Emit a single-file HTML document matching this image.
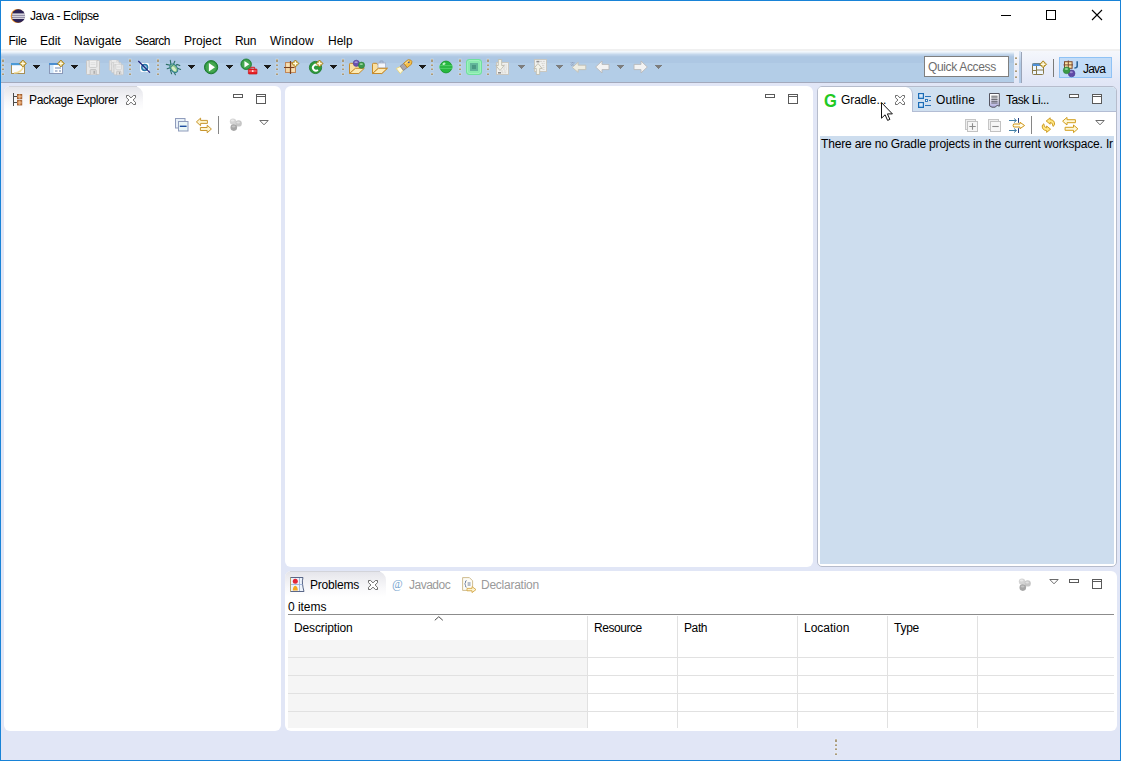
<!DOCTYPE html>
<html>
<head>
<meta charset="utf-8">
<title>Java - Eclipse</title>
<style>
html,body{margin:0;padding:0;}
body{width:1121px;height:761px;overflow:hidden;background:#e1e6f6;font-family:"Liberation Sans",sans-serif;font-size:12px;color:#000;position:relative;}
.a{position:absolute;}
svg{position:absolute;overflow:visible;}
.t{position:absolute;white-space:nowrap;line-height:16px;height:16px;}
#win{position:absolute;left:0;top:0;width:1119px;height:759px;border:1px solid #1883d7;background:#e1e6f6;overflow:hidden;}
/* all children of #win are positioned relative to (1,1); use #o to offset to page coords */
#o{position:absolute;left:-1px;top:-1px;width:1121px;height:761px;}
#titlebar{left:1px;top:1px;width:1119px;height:48px;background:#fff;}
#tbtop{left:1px;top:49px;width:1119px;height:2px;background:#f0f0f0;}
#toolbar{left:1px;top:51px;width:1013px;height:31px;background:linear-gradient(#f8fbfe 0px,#e6eff8 1.5px,#c4d7ec 3.5px,#b1c9e4 5.5px,#adc7e3 6.5px,#adc7e3 11.5px,#b3cde7 12.5px,#b3cde7 31px);}
#tbline{left:1px;top:82px;width:1013px;height:1px;background:#a3a9bc;}
#persp{left:1014px;top:51px;width:106px;height:32px;background:linear-gradient(#f5f7fc,#e1e6f6);}
.panel{position:absolute;background:#fff;border-radius:6px;}
.sep{position:absolute;width:1px;background:#868686;}
.hd{position:absolute;width:3px;height:16px;}
.arr{position:absolute;width:0;height:0;border-left:3.5px solid transparent;border-right:3.5px solid transparent;border-top:4px solid #1a1a1a;}
.arr.g{border-top-color:#787878;}
.gray{color:#9a9a9a;}
</style>
</head>
<body>
<div id="win"><div id="o">
  <div class="a" id="titlebar"></div>
  <div class="a" id="tbtop"></div>
  <div class="a" id="toolbar"></div>
  <div class="a" id="tbline"></div>
  <div class="a" id="persp"></div>
  <!-- title bar -->
  <svg style="left:10px;top:8px" width="16" height="16" viewBox="0 0 16 16">
    <circle cx="7.6" cy="8" r="6.9" fill="#f7941e"/>
    <circle cx="8.4" cy="8" r="6.7" fill="#2c2255"/>
    <rect x="2.2" y="5.5" width="12.6" height="1.3" fill="#fff"/>
    <rect x="1.8" y="7.5" width="13.2" height="1.3" fill="#fff"/>
    <rect x="2.2" y="9.5" width="12.6" height="1.3" fill="#fff"/>
  </svg>
  <span class="t" style="left:30px;top:8px;letter-spacing:-0.42px;">Java - Eclipse</span>
  <svg style="left:1001px;top:10px" width="102" height="11" viewBox="0 0 102 11">
    <path d="M0 5.5H10" stroke="#000" stroke-width="1" fill="none"/>
    <rect x="45.5" y="0.5" width="9" height="9" stroke="#000" stroke-width="1" fill="none"/>
    <path d="M91 0L101 10M101 0L91 10" stroke="#000" stroke-width="1.1" fill="none"/>
  </svg>
  <!-- menu -->
  <span class="t" style="left:8.5px;top:33px;letter-spacing:-0.3px;">File</span>
  <span class="t" style="left:40px;top:33px;">Edit</span>
  <span class="t" style="left:74px;top:33px;">Navigate</span>
  <span class="t" style="left:135px;top:33px;letter-spacing:-0.5px;">Search</span>
  <span class="t" style="left:184px;top:33px;">Project</span>
  <span class="t" style="left:235px;top:33px;letter-spacing:-0.3px;">Run</span>
  <span class="t" style="left:270px;top:33px;letter-spacing:0.2px;">Window</span>
  <span class="t" style="left:328px;top:33px;">Help</span>
<!--TITLE_END-->
<!--TOOLBAR-->
<svg style="left:1px;top:58px" width="4" height="18" viewBox="0 0 4 18"><rect x="0.4" y="0.4" width="3.2" height="4.2" fill="#ffffff" fill-opacity="0.22"/><rect x="1" y="1" width="2" height="3" fill="#a89a7c"/><rect x="1" y="1" width="2" height="1" fill="#c8bca4"/><rect x="0.4" y="5.4" width="3.2" height="3.2" fill="#ffffff" fill-opacity="0.22"/><rect x="1" y="6" width="2" height="2" fill="#a89a7c"/><rect x="1" y="6" width="2" height="1" fill="#c8bca4"/><rect x="0.4" y="9.4" width="3.2" height="3.2" fill="#ffffff" fill-opacity="0.22"/><rect x="1" y="10" width="2" height="2" fill="#a89a7c"/><rect x="1" y="10" width="2" height="1" fill="#c8bca4"/><rect x="0.4" y="14.4" width="3.2" height="3.2" fill="#ffffff" fill-opacity="0.22"/><rect x="1" y="15" width="2" height="2" fill="#a89a7c"/><rect x="1" y="15" width="2" height="1" fill="#c8bca4"/></svg>
<svg style="left:11px;top:60px" width="16" height="15" viewBox="0 0 16 15"><rect x="0.5" y="3.5" width="13" height="10" fill="#f8fbff" stroke="#a78f55" stroke-width="1"/><rect x="0" y="3" width="14" height="2.2" fill="#4b9ad8"/><path d="M3 13C8 13 12 10 12.5 6" stroke="#f2dc9a" stroke-width="1.6" fill="none"/><g transform="translate(8.4,0)"><path d="M3.5 0L7 3.5L3.5 7L0 3.5Z" fill="#c39a22" stroke="#a07a16" stroke-width="0.7"/><path d="M3.5 1.2V5.8M1.2 3.5H5.8" stroke="#fffbe6" stroke-width="1.4"/></g></svg>
<svg style="left:33px;top:65px" width="7" height="4" viewBox="0 0 7 4" shape-rendering="crispEdges"><path d="M0 0H7V1H6V2H5V3H4V4H3V3H2V2H1V1H0Z" fill="#1a1a1a"/></svg>
<svg style="left:49px;top:60px" width="16" height="15" viewBox="0 0 16 15"><rect x="0.5" y="3.5" width="13" height="10" fill="#fdfeff" stroke="#8a98b8" stroke-width="1"/><rect x="0" y="3" width="14" height="2" fill="#4b8ed0"/><rect x="1" y="5" width="3.5" height="8" fill="#cfe6fa"/><path d="M6 8H12M6 11H8.5M10 11H12" stroke="#6f86b0" stroke-width="1.1"/><g transform="translate(8.4,0)"><path d="M3.5 0L7 3.5L3.5 7L0 3.5Z" fill="#c39a22" stroke="#a07a16" stroke-width="0.7"/><path d="M3.5 1.2V5.8M1.2 3.5H5.8" stroke="#fffbe6" stroke-width="1.4"/></g></svg>
<svg style="left:71px;top:65px" width="7" height="4" viewBox="0 0 7 4" shape-rendering="crispEdges"><path d="M0 0H7V1H6V2H5V3H4V4H3V3H2V2H1V1H0Z" fill="#1a1a1a"/></svg>
<svg style="left:86px;top:60px" width="15" height="16" viewBox="0 0 15 16"><path d="M0.5 1.5Q0.5 0.5 1.5 0.5H12.5Q13.5 0.5 13.5 1.5V13.5Q13.5 14.5 12.5 14.5H1.5Q0.5 14.5 0.5 13.5Z" fill="#e8e8e8" stroke="#c6c6c6"/><path d="M3.2 0.5V6.4Q3.2 7.4 4.2 7.4H9.8Q10.8 7.4 10.8 6.4V0.5" fill="#f1f1f1" stroke="#c2c2c2" stroke-width="0.8"/><path d="M4.5 2.8H9.5M4.5 4.6H9.5" stroke="#d4d4d4" stroke-width="0.7"/><path d="M4.2 14.5V10.4Q4.2 9.6 5 9.6H9.4Q10.2 9.6 10.2 10.4V14.5" fill="#dcdcdc" stroke="#b6b6b6" stroke-width="0.8"/><rect x="7.6" y="10.8" width="1.1" height="3" fill="#9c9c9c"/></svg>
<svg style="left:109px;top:60px" width="16" height="16" viewBox="0 0 16 16"><g transform="scale(0.72)"><path d="M0.5 1.5Q0.5 0.5 1.5 0.5H12.5Q13.5 0.5 13.5 1.5V13.5Q13.5 14.5 12.5 14.5H1.5Q0.5 14.5 0.5 13.5Z" fill="#e8e8e8" stroke="#c6c6c6"/><path d="M3.2 0.5V6.4Q3.2 7.4 4.2 7.4H9.8Q10.8 7.4 10.8 6.4V0.5" fill="#f1f1f1" stroke="#c2c2c2" stroke-width="0.8"/><path d="M4.5 2.8H9.5M4.5 4.6H9.5" stroke="#d4d4d4" stroke-width="0.7"/><path d="M4.2 14.5V10.4Q4.2 9.6 5 9.6H9.4Q10.2 9.6 10.2 10.4V14.5" fill="#dcdcdc" stroke="#b6b6b6" stroke-width="0.8"/><rect x="7.6" y="10.8" width="1.1" height="3" fill="#9c9c9c"/></g><g transform="translate(2.3,2.2) scale(0.72)"><path d="M0.5 1.5Q0.5 0.5 1.5 0.5H12.5Q13.5 0.5 13.5 1.5V13.5Q13.5 14.5 12.5 14.5H1.5Q0.5 14.5 0.5 13.5Z" fill="#e8e8e8" stroke="#c6c6c6"/><path d="M3.2 0.5V6.4Q3.2 7.4 4.2 7.4H9.8Q10.8 7.4 10.8 6.4V0.5" fill="#f1f1f1" stroke="#c2c2c2" stroke-width="0.8"/><path d="M4.5 2.8H9.5M4.5 4.6H9.5" stroke="#d4d4d4" stroke-width="0.7"/><path d="M4.2 14.5V10.4Q4.2 9.6 5 9.6H9.4Q10.2 9.6 10.2 10.4V14.5" fill="#dcdcdc" stroke="#b6b6b6" stroke-width="0.8"/><rect x="7.6" y="10.8" width="1.1" height="3" fill="#9c9c9c"/></g><g transform="translate(4.6,4.4) scale(0.72)"><path d="M0.5 1.5Q0.5 0.5 1.5 0.5H12.5Q13.5 0.5 13.5 1.5V13.5Q13.5 14.5 12.5 14.5H1.5Q0.5 14.5 0.5 13.5Z" fill="#e8e8e8" stroke="#c6c6c6"/><path d="M3.2 0.5V6.4Q3.2 7.4 4.2 7.4H9.8Q10.8 7.4 10.8 6.4V0.5" fill="#f1f1f1" stroke="#c2c2c2" stroke-width="0.8"/><path d="M4.5 2.8H9.5M4.5 4.6H9.5" stroke="#d4d4d4" stroke-width="0.7"/><path d="M4.2 14.5V10.4Q4.2 9.6 5 9.6H9.4Q10.2 9.6 10.2 10.4V14.5" fill="#dcdcdc" stroke="#b6b6b6" stroke-width="0.8"/><rect x="7.6" y="10.8" width="1.1" height="3" fill="#9c9c9c"/></g></svg>
<svg style="left:128px;top:58px" width="4" height="18" viewBox="0 0 4 18"><rect x="0.4" y="0.4" width="3.2" height="4.2" fill="#ffffff" fill-opacity="0.22"/><rect x="1" y="1" width="2" height="3" fill="#a89a7c"/><rect x="1" y="1" width="2" height="1" fill="#c8bca4"/><rect x="0.4" y="5.4" width="3.2" height="3.2" fill="#ffffff" fill-opacity="0.22"/><rect x="1" y="6" width="2" height="2" fill="#a89a7c"/><rect x="1" y="6" width="2" height="1" fill="#c8bca4"/><rect x="0.4" y="9.4" width="3.2" height="3.2" fill="#ffffff" fill-opacity="0.22"/><rect x="1" y="10" width="2" height="2" fill="#a89a7c"/><rect x="1" y="10" width="2" height="1" fill="#c8bca4"/><rect x="0.4" y="14.4" width="3.2" height="3.2" fill="#ffffff" fill-opacity="0.22"/><rect x="1" y="15" width="2" height="2" fill="#a89a7c"/><rect x="1" y="15" width="2" height="1" fill="#c8bca4"/></svg>
<svg style="left:138px;top:60px" width="14" height="14" viewBox="0 0 14 14"><rect x="2.2" y="3" width="9" height="9" rx="2" fill="#fff"/><circle cx="6.7" cy="7.5" r="2.9" fill="#a4cbe4" stroke="#2878a8" stroke-width="1.5"/><path d="M0.3 1L12 12.6" stroke="#1c1c78" stroke-width="1.1"/></svg>
<svg style="left:156px;top:58px" width="4" height="18" viewBox="0 0 4 18"><rect x="0.4" y="0.4" width="3.2" height="4.2" fill="#ffffff" fill-opacity="0.22"/><rect x="1" y="1" width="2" height="3" fill="#a89a7c"/><rect x="1" y="1" width="2" height="1" fill="#c8bca4"/><rect x="0.4" y="5.4" width="3.2" height="3.2" fill="#ffffff" fill-opacity="0.22"/><rect x="1" y="6" width="2" height="2" fill="#a89a7c"/><rect x="1" y="6" width="2" height="1" fill="#c8bca4"/><rect x="0.4" y="9.4" width="3.2" height="3.2" fill="#ffffff" fill-opacity="0.22"/><rect x="1" y="10" width="2" height="2" fill="#a89a7c"/><rect x="1" y="10" width="2" height="1" fill="#c8bca4"/><rect x="0.4" y="14.4" width="3.2" height="3.2" fill="#ffffff" fill-opacity="0.22"/><rect x="1" y="15" width="2" height="2" fill="#a89a7c"/><rect x="1" y="15" width="2" height="1" fill="#c8bca4"/></svg>
<svg style="left:166px;top:60px" width="16" height="16" viewBox="0 0 16 16"><path d="M4.3 0.3L4.9 4.4M8.8 1.2L7.4 4.6M0.3 4.4L4.4 5.2M1.2 8.8L4.8 7.6M4.4 10.2L5.6 13.8M9.4 6L11 4.4L13.8 5.6M10.8 8L14.6 9.4M8 12L9.4 14.7" stroke="#2c6e63" stroke-width="1.1" fill="none" stroke-linecap="round"/><g transform="rotate(-40 7.8 8.2)"><ellipse cx="7.8" cy="8.2" rx="3.1" ry="4.9" fill="#8fc58a" stroke="#2b7b8c" stroke-width="1"/><ellipse cx="7.4" cy="8.8" rx="1.5" ry="2.8" fill="#d6ecc8"/><path d="M4.9 5.2H10.7" stroke="#2b7b8c" stroke-width="0.8"/></g></svg>
<svg style="left:188px;top:65px" width="7" height="4" viewBox="0 0 7 4" shape-rendering="crispEdges"><path d="M0 0H7V1H6V2H5V3H4V4H3V3H2V2H1V1H0Z" fill="#1a1a1a"/></svg>
<svg style="left:204px;top:60px" width="15" height="15" viewBox="0 0 15 15"><circle cx="7.1" cy="7.2" r="6.6" fill="#2e9540" stroke="#1c7a30" stroke-width="1"/><circle cx="7.1" cy="7.2" r="5.3" fill="#45a850"/><path d="M4.9 3L11 7.2L4.9 11.4Z" fill="#fff"/></svg>
<svg style="left:226px;top:65px" width="7" height="4" viewBox="0 0 7 4" shape-rendering="crispEdges"><path d="M0 0H7V1H6V2H5V3H4V4H3V3H2V2H1V1H0Z" fill="#1a1a1a"/></svg>
<svg style="left:240px;top:58px" width="18" height="18" viewBox="0 0 18 18"><g transform="translate(0.5,0.5) scale(0.8)"><circle cx="7.1" cy="7.2" r="6.6" fill="#2e9540" stroke="#1c7a30" stroke-width="1"/><circle cx="7.1" cy="7.2" r="5.3" fill="#45a850"/><path d="M4.9 3L11 7.2L4.9 11.4Z" fill="#fff"/></g><rect x="8.4" y="11" width="8.6" height="5" rx="0.6" fill="#e62026" stroke="#c41418" stroke-width="0.7"/><path d="M10.8 10.8V9.3H14.6V10.8" stroke="#d81a1e" stroke-width="1" fill="none"/><path d="M8.8 13H16.6" stroke="#f7a0a0" stroke-width="0.8"/><rect x="11.9" y="12.3" width="1.6" height="1.5" fill="#fff"/></svg>
<svg style="left:264px;top:65px" width="7" height="4" viewBox="0 0 7 4" shape-rendering="crispEdges"><path d="M0 0H7V1H6V2H5V3H4V4H3V3H2V2H1V1H0Z" fill="#1a1a1a"/></svg>
<svg style="left:275px;top:58px" width="4" height="18" viewBox="0 0 4 18"><rect x="0.4" y="0.4" width="3.2" height="4.2" fill="#ffffff" fill-opacity="0.22"/><rect x="1" y="1" width="2" height="3" fill="#a89a7c"/><rect x="1" y="1" width="2" height="1" fill="#c8bca4"/><rect x="0.4" y="5.4" width="3.2" height="3.2" fill="#ffffff" fill-opacity="0.22"/><rect x="1" y="6" width="2" height="2" fill="#a89a7c"/><rect x="1" y="6" width="2" height="1" fill="#c8bca4"/><rect x="0.4" y="9.4" width="3.2" height="3.2" fill="#ffffff" fill-opacity="0.22"/><rect x="1" y="10" width="2" height="2" fill="#a89a7c"/><rect x="1" y="10" width="2" height="1" fill="#c8bca4"/><rect x="0.4" y="14.4" width="3.2" height="3.2" fill="#ffffff" fill-opacity="0.22"/><rect x="1" y="15" width="2" height="2" fill="#a89a7c"/><rect x="1" y="15" width="2" height="1" fill="#c8bca4"/></svg>
<svg style="left:284px;top:60px" width="16" height="15" viewBox="0 0 16 15"><rect x="1.5" y="2.5" width="10" height="10" fill="#efcf9e" stroke="#c0875a" stroke-width="1"/><rect x="2.3" y="3.3" width="3.4" height="3.4" fill="#f7e0b4"/><rect x="7.4" y="8.4" width="3.4" height="3.4" fill="#f7e0b4"/><rect x="2.3" y="8.4" width="3.4" height="3.4" fill="#f3d6a6"/><path d="M6.5 1V14M0 7.5H10.5" stroke="#7a3f1c" stroke-width="1.2"/><g transform="translate(7.9,0)"><path d="M3.5 0L7 3.5L3.5 7L0 3.5Z" fill="#c39a22" stroke="#a07a16" stroke-width="0.7"/><path d="M3.5 1.2V5.8M1.2 3.5H5.8" stroke="#fffbe6" stroke-width="1.4"/></g></svg>
<svg style="left:309px;top:60px" width="16" height="16" viewBox="0 0 16 16"><circle cx="6.5" cy="7.5" r="6.1" fill="#2e9a3c" stroke="#1d7a2b" stroke-width="0.9"/><path d="M8.9 5.4A3 3 0 1 0 8.9 9.9" stroke="#fff" stroke-width="1.9" fill="none"/><g transform="translate(7,0)"><path d="M3.5 0L7 3.5L3.5 7L0 3.5Z" fill="#c39a22" stroke="#a07a16" stroke-width="0.7"/><path d="M3.5 1.2V5.8M1.2 3.5H5.8" stroke="#fffbe6" stroke-width="1.4"/></g></svg>
<svg style="left:330px;top:65px" width="7" height="4" viewBox="0 0 7 4" shape-rendering="crispEdges"><path d="M0 0H7V1H6V2H5V3H4V4H3V3H2V2H1V1H0Z" fill="#1a1a1a"/></svg>
<svg style="left:341px;top:58px" width="4" height="18" viewBox="0 0 4 18"><rect x="0.4" y="0.4" width="3.2" height="4.2" fill="#ffffff" fill-opacity="0.22"/><rect x="1" y="1" width="2" height="3" fill="#a89a7c"/><rect x="1" y="1" width="2" height="1" fill="#c8bca4"/><rect x="0.4" y="5.4" width="3.2" height="3.2" fill="#ffffff" fill-opacity="0.22"/><rect x="1" y="6" width="2" height="2" fill="#a89a7c"/><rect x="1" y="6" width="2" height="1" fill="#c8bca4"/><rect x="0.4" y="9.4" width="3.2" height="3.2" fill="#ffffff" fill-opacity="0.22"/><rect x="1" y="10" width="2" height="2" fill="#a89a7c"/><rect x="1" y="10" width="2" height="1" fill="#c8bca4"/><rect x="0.4" y="14.4" width="3.2" height="3.2" fill="#ffffff" fill-opacity="0.22"/><rect x="1" y="15" width="2" height="2" fill="#a89a7c"/><rect x="1" y="15" width="2" height="1" fill="#c8bca4"/></svg>
<svg style="left:349px;top:60px" width="17" height="15" viewBox="0 0 17 15"><path d="M0.5 13.5V4.2Q0.5 3.3 1.4 3.3H4.2Q5 3.3 5.3 4.3H11.5Q12.4 4.3 12.4 5.2V9H6Z" fill="#fbe0a0" stroke="#c68a2a" stroke-width="1" stroke-linejoin="round"/><path d="M0.6 13.5L6.4 8.3H15.3L9.8 13.5Z" fill="#fdeab4" stroke="#c68a2a" stroke-width="1" stroke-linejoin="round"/><circle cx="7.3" cy="3.3" r="3.1" fill="#6a52b0" stroke="#4d3a92" stroke-width="0.6"/><ellipse cx="7.1" cy="2.2" rx="1.7" ry="0.9" fill="#a796d6"/><circle cx="12.5" cy="5.2" r="3.1" fill="#3c9a4c" stroke="#2a7a38" stroke-width="0.6"/><ellipse cx="12.3" cy="4.1" rx="1.7" ry="0.9" fill="#9ad4a2"/></svg>
<svg style="left:372px;top:60px" width="17" height="15" viewBox="0 0 17 15"><path d="M0.5 13.5V4.2Q0.5 3.3 1.4 3.3H4.2Q5 3.3 5.3 4.3H11.5Q12.4 4.3 12.4 5.2V9H6Z" fill="#fbe0a0" stroke="#c68a2a" stroke-width="1" stroke-linejoin="round"/><path d="M0.6 13.5L6.4 8.3H15.3L9.8 13.5Z" fill="#fdeab4" stroke="#c68a2a" stroke-width="1" stroke-linejoin="round"/><path d="M8 3V1.6Q8 1 8.6 1H10.4Q11 1 11 1.6V3" fill="none" stroke="#93a0bc" stroke-width="1"/><rect x="6" y="3" width="7.6" height="5" fill="#f4f6fb" stroke="#a9b3c9" stroke-width="0.9"/><path d="M0.6 13.5L6.4 8.3H15.3L9.8 13.5Z" fill="#fdeab4" stroke="#c68a2a" stroke-width="1" stroke-linejoin="round"/></svg>
<svg style="left:396px;top:59px" width="17" height="16" viewBox="0 0 17 16"><g transform="translate(2.3,12.1) rotate(-38.5)"><path d="M0 -3.2L4.6 -2.3V2.3L0 3.2Z" fill="#fffbe0" stroke="#f0d264" stroke-width="0.7" stroke-linejoin="round"/><path d="M4.5 -2.7H9.2V2.7H4.5Z" fill="#aaa6ac" stroke="#7c7880" stroke-width="0.7"/><path d="M9.2 -2.8H14.6L16.6 -1V1L14.6 2.8H9.2Z" fill="#f6c04a" stroke="#bf851c" stroke-width="0.8" stroke-linejoin="round"/><path d="M9.6 -1.6H14.8" stroke="#fbe09a" stroke-width="1"/><rect x="12.8" y="-1" width="1.8" height="1.3" fill="#2c4da0"/></g></svg>
<svg style="left:419px;top:65px" width="7" height="4" viewBox="0 0 7 4" shape-rendering="crispEdges"><path d="M0 0H7V1H6V2H5V3H4V4H3V3H2V2H1V1H0Z" fill="#1a1a1a"/></svg>
<svg style="left:430px;top:58px" width="4" height="18" viewBox="0 0 4 18"><rect x="0.4" y="0.4" width="3.2" height="4.2" fill="#ffffff" fill-opacity="0.22"/><rect x="1" y="1" width="2" height="3" fill="#a89a7c"/><rect x="1" y="1" width="2" height="1" fill="#c8bca4"/><rect x="0.4" y="5.4" width="3.2" height="3.2" fill="#ffffff" fill-opacity="0.22"/><rect x="1" y="6" width="2" height="2" fill="#a89a7c"/><rect x="1" y="6" width="2" height="1" fill="#c8bca4"/><rect x="0.4" y="9.4" width="3.2" height="3.2" fill="#ffffff" fill-opacity="0.22"/><rect x="1" y="10" width="2" height="2" fill="#a89a7c"/><rect x="1" y="10" width="2" height="1" fill="#c8bca4"/><rect x="0.4" y="14.4" width="3.2" height="3.2" fill="#ffffff" fill-opacity="0.22"/><rect x="1" y="15" width="2" height="2" fill="#a89a7c"/><rect x="1" y="15" width="2" height="1" fill="#c8bca4"/></svg>
<svg style="left:439px;top:60px" width="15" height="15" viewBox="0 0 15 15"><circle cx="7" cy="7" r="5.9" fill="#27b840" stroke="#1b9a30" stroke-width="0.9"/><ellipse cx="5" cy="3.8" rx="1.6" ry="1.1" fill="#b9f2c0" transform="rotate(-30 5 3.8)"/><path d="M0 5.8H14M0 8.2H14" stroke="#6fe488" stroke-width="0.8"/><path d="M0.4 7H13.6" stroke="#3fd05a" stroke-width="1"/><path d="M1.2 6.4H12.8M1.2 7.6H12.8" stroke="#1fa236" stroke-width="0.5"/></svg>
<svg style="left:458px;top:58px" width="4" height="18" viewBox="0 0 4 18"><rect x="0.4" y="0.4" width="3.2" height="4.2" fill="#ffffff" fill-opacity="0.22"/><rect x="1" y="1" width="2" height="3" fill="#a89a7c"/><rect x="1" y="1" width="2" height="1" fill="#c8bca4"/><rect x="0.4" y="5.4" width="3.2" height="3.2" fill="#ffffff" fill-opacity="0.22"/><rect x="1" y="6" width="2" height="2" fill="#a89a7c"/><rect x="1" y="6" width="2" height="1" fill="#c8bca4"/><rect x="0.4" y="9.4" width="3.2" height="3.2" fill="#ffffff" fill-opacity="0.22"/><rect x="1" y="10" width="2" height="2" fill="#a89a7c"/><rect x="1" y="10" width="2" height="1" fill="#c8bca4"/><rect x="0.4" y="14.4" width="3.2" height="3.2" fill="#ffffff" fill-opacity="0.22"/><rect x="1" y="15" width="2" height="2" fill="#a89a7c"/><rect x="1" y="15" width="2" height="1" fill="#c8bca4"/></svg>
<svg style="left:466px;top:59px" width="16" height="16" viewBox="0 0 16 16"><rect x="0.5" y="0.5" width="15" height="15" rx="2.5" fill="#8aeab0" stroke="#6fe09c" stroke-width="1"/><path d="M3 1.5H13L14.5 3V13L13 14.5H3L1.5 13V3Z" fill="none" stroke="#a4f2c0" stroke-width="0.8"/><rect x="4" y="4" width="8" height="8" fill="#62b69a"/><rect x="6" y="6" width="4" height="4" fill="#4a9882"/></svg>
<svg style="left:486px;top:58px" width="4" height="18" viewBox="0 0 4 18"><rect x="0.4" y="0.4" width="3.2" height="4.2" fill="#ffffff" fill-opacity="0.22"/><rect x="1" y="1" width="2" height="3" fill="#a89a7c"/><rect x="1" y="1" width="2" height="1" fill="#c8bca4"/><rect x="0.4" y="5.4" width="3.2" height="3.2" fill="#ffffff" fill-opacity="0.22"/><rect x="1" y="6" width="2" height="2" fill="#a89a7c"/><rect x="1" y="6" width="2" height="1" fill="#c8bca4"/><rect x="0.4" y="9.4" width="3.2" height="3.2" fill="#ffffff" fill-opacity="0.22"/><rect x="1" y="10" width="2" height="2" fill="#a89a7c"/><rect x="1" y="10" width="2" height="1" fill="#c8bca4"/><rect x="0.4" y="14.4" width="3.2" height="3.2" fill="#ffffff" fill-opacity="0.22"/><rect x="1" y="15" width="2" height="2" fill="#a89a7c"/><rect x="1" y="15" width="2" height="1" fill="#c8bca4"/></svg>
<svg style="left:495px;top:59px" width="15" height="16" viewBox="0 0 15 16"><rect x="1.5" y="3.5" width="12" height="12" fill="#f1f1ef" stroke="#c9c7c0" stroke-width="1"/><path d="M8.5 6H12M8.5 8H12M8 10H12M6 12H12M6.5 13.8H12" stroke="#cfcdc6" stroke-width="0.8" stroke-dasharray="2 0.8"/><path d="M3.3 0.5H6.7V6.5H9.2L5 11.5L0.8 6.5H3.3Z" fill="#f3f2e8" stroke="#bebcb0" stroke-width="0.9" stroke-linejoin="round"/><rect x="3" y="13" width="3" height="1.6" fill="#8f8f8f"/></svg>
<svg style="left:518px;top:65px" width="7" height="4" viewBox="0 0 7 4" shape-rendering="crispEdges"><path d="M0 0H7V1H6V2H5V3H4V4H3V3H2V2H1V1H0Z" fill="#7d7d7d"/></svg>
<svg style="left:533px;top:59px" width="15" height="16" viewBox="0 0 15 16"><rect x="1.5" y="0.5" width="12" height="12" fill="#f1f1ef" stroke="#c9c7c0" stroke-width="1"/><path d="M7 2.4H12M8.5 4.4H12M9 6.4H12M9.5 8.4H12M9.5 10.4H12" stroke="#cfcdc6" stroke-width="0.8" stroke-dasharray="2 0.8"/><path d="M3.3 15.5H6.7V9.5H9.2L5 4.5L0.8 9.5H3.3Z" fill="#f3f2e8" stroke="#bebcb0" stroke-width="0.9" stroke-linejoin="round"/><rect x="3.4" y="1.8" width="3" height="1.6" fill="#8f8f8f"/></svg>
<svg style="left:556px;top:65px" width="7" height="4" viewBox="0 0 7 4" shape-rendering="crispEdges"><path d="M0 0H7V1H6V2H5V3H4V4H3V3H2V2H1V1H0Z" fill="#7d7d7d"/></svg>
<svg style="left:570px;top:60px" width="17" height="14" viewBox="0 0 17 14"><path d="M15.8 5.2V9.6H8.2V12.4L2.2 7.4L8.2 2.2V5.2Z" fill="#eeede2" stroke="#c2c0b4" stroke-width="0.9" stroke-linejoin="round"/><path d="M0.8 2.2L1.8 3.4L2.8 2.2L3.8 3.4L4.6 2.6M0.8 4.4L1.8 5.6L2.8 4.4L3.8 5.6" stroke="#8a96b0" stroke-width="0.8" fill="none"/></svg>
<svg style="left:595px;top:60px" width="15" height="14" viewBox="0 0 15 14"><path d="M14 4.4V9.6H7V13L0.7 7L7 1V4.4Z" fill="#f3f3f3" stroke="#b9b9b9" stroke-width="0.9" stroke-linejoin="round"/></svg>
<svg style="left:617px;top:65px" width="7" height="4" viewBox="0 0 7 4" shape-rendering="crispEdges"><path d="M0 0H7V1H6V2H5V3H4V4H3V3H2V2H1V1H0Z" fill="#7d7d7d"/></svg>
<svg style="left:633px;top:60px" width="15" height="14" viewBox="0 0 15 14"><path d="M1 4.4V9.6H8V13L14.3 7L8 1V4.4Z" fill="#f3f3f3" stroke="#b9b9b9" stroke-width="0.9" stroke-linejoin="round"/></svg>
<svg style="left:655px;top:65px" width="7" height="4" viewBox="0 0 7 4" shape-rendering="crispEdges"><path d="M0 0H7V1H6V2H5V3H4V4H3V3H2V2H1V1H0Z" fill="#7d7d7d"/></svg>
<div class="a" style="left:924px;top:56px;width:83px;height:19px;border:1px solid #7f7f7f;background:#fff;"></div>
<span class="t" style="left:928px;top:59px;color:#6d6d6d;letter-spacing:-0.35px;">Quick Access</span>
<svg style="left:1014px;top:56px" width="4" height="23" viewBox="0 0 4 23"><rect x="0.4" y="0.4" width="3.2" height="3.2" fill="#fff" fill-opacity="0.22"/><rect x="1" y="1" width="2" height="2" fill="#a89a7c"/><rect x="1" y="1" width="2" height="1" fill="#c8bca4"/><rect x="0.4" y="6.4" width="3.2" height="3.2" fill="#fff" fill-opacity="0.22"/><rect x="1" y="7" width="2" height="2" fill="#a89a7c"/><rect x="1" y="7" width="2" height="1" fill="#c8bca4"/><rect x="0.4" y="13.4" width="3.2" height="3.2" fill="#fff" fill-opacity="0.22"/><rect x="1" y="14" width="2" height="2" fill="#a89a7c"/><rect x="1" y="14" width="2" height="1" fill="#c8bca4"/><rect x="0.4" y="19.4" width="3.2" height="3.2" fill="#fff" fill-opacity="0.22"/><rect x="1" y="20" width="2" height="2" fill="#a89a7c"/><rect x="1" y="20" width="2" height="1" fill="#c8bca4"/></svg>
<div class="a" style="left:1019px;top:51px;width:2px;height:32px;background:linear-gradient(#dbe6f4,#b0c9e5 40%);"></div>
<div class="a" style="left:1021px;top:52px;width:1px;height:31px;background:#9aa4b8;"></div>
<svg style="left:1032px;top:61px" width="15" height="15" viewBox="0 0 15 15"><rect x="0.5" y="2.5" width="11" height="11" rx="1" fill="#eef7ff" stroke="#8a7a4a" stroke-width="1"/><rect x="0.5" y="2.5" width="11" height="2.5" fill="#4f90d8"/><path d="M4.5 5V13.5M4.5 9H11.5M0.5 9.5H4.5" stroke="#8a7a4a" stroke-width="1"/><g transform="translate(7.6,-0.2)"><path d="M3.5 0L7 3.5L3.5 7L0 3.5Z" fill="#c39a22" stroke="#a07a16" stroke-width="0.7"/><path d="M3.5 1.2V5.8M1.2 3.5H5.8" stroke="#fffbe6" stroke-width="1.4"/></g></svg>
<div class="sep" style="left:1053px;top:59px;height:18px;background:#7a7a7a;"></div>
<div class="a" style="left:1059px;top:57px;width:51px;height:19px;border:1px solid #8fc2f5;background:#c2dcf8;"></div>
<svg style="left:1063px;top:60px" width="16" height="17" viewBox="0 0 16 17"><rect x="1.5" y="1.7" width="7.6" height="6.6" fill="#fbe3a6" stroke="#7d4a30" stroke-width="1"/><path d="M5.3 0.5V9M0.5 4.9H10" stroke="#7d4a30" stroke-width="1"/><path d="M14.2 1.2V6Q14.2 8 11.4 8" stroke="#2c6699" stroke-width="1.6" fill="none"/><circle cx="8.6" cy="13.4" r="3.4" fill="#5f4aa8" stroke="#46358a" stroke-width="0.5"/><ellipse cx="8.2" cy="12.2" rx="1.7" ry="1" fill="#9d8cd0"/><circle cx="3.6" cy="10.3" r="3.4" fill="#3a9a46" stroke="#2a7a36" stroke-width="0.5"/><ellipse cx="3.4" cy="9.1" rx="1.7" ry="1" fill="#93d29a"/></svg>
<span class="t" style="left:1083px;top:61px;letter-spacing:-0.8px;">Java</span>
<!--TOOLBAR_END-->
<!--PANELS-->
<div class="panel" style="left:4px;top:86px;width:277px;height:645px;"></div>
<div class="a" style="left:4px;top:86px;width:139px;height:26px;border-radius:6px 9px 0 0;background:linear-gradient(#e3e4ea 0,#ececf0 6px,#f8f8fa 16px,#fff 25px);"></div>
<div class="a" style="left:9px;top:86px;width:128px;height:1px;background:#d3d4da;"></div>
<svg style="left:12px;top:93px" width="11" height="14" viewBox="0 0 11 14"><path d="M1.5 0V13M1.5 3.5H5M1.5 9.5H5" stroke="#4a4a4a" stroke-width="1" fill="none"/><rect x="5.4" y="1.4" width="4.4" height="4.4" fill="#d9915a" stroke="#9a531f" stroke-width="0.8"/><path d="M7.6 1.4V5.8M5.4 3.6H9.8" stroke="#f3c99c" stroke-width="0.6"/><rect x="5.4" y="7.6" width="4.4" height="4.4" fill="#d9915a" stroke="#9a531f" stroke-width="0.8"/><path d="M7.6 7.6V12M5.4 9.8H9.8" stroke="#f3c99c" stroke-width="0.6"/></svg>
<span class="t" style="left:29px;top:92px;letter-spacing:-0.36px;">Package Explorer</span>
<svg style="left:126px;top:95px" width="10" height="10" viewBox="0 0 10 10"><path d="M0.5 0.5H2.6L5 2.9L7.4 0.5H9.5V2.6L7.1 5L9.5 7.4V9.5H7.4L5 7.1L2.6 9.5H0.5V7.4L2.9 5L0.5 2.6Z" fill="#fff" stroke="#5c5c5c" stroke-width="0.9" stroke-linejoin="miter"/></svg>
<svg style="left:233px;top:94px" width="10" height="4" viewBox="0 0 10 4"><rect x="0.5" y="0.5" width="9" height="3" fill="#fff" stroke="#5a5a5a" stroke-width="1"/></svg>
<svg style="left:256px;top:94px" width="10" height="10" viewBox="0 0 10 10"><rect x="0.5" y="0.5" width="9" height="9" fill="#fff" stroke="#5a5a5a" stroke-width="1"/><path d="M0 2.5H10" stroke="#5a5a5a" stroke-width="1"/></svg>
<svg style="left:175px;top:118px" width="14" height="14" viewBox="0 0 14 14"><rect x="0.5" y="0.5" width="9.5" height="9.5" fill="#e8f0f8" stroke="#8f9cbc" stroke-width="1"/><rect x="3.5" y="3.5" width="9.5" height="9.5" fill="#eaf6f6" stroke="#8f9cbc" stroke-width="1"/><path d="M4.8 8.3H11.6" stroke="#1f4fa0" stroke-width="1.4"/></svg>
<svg style="left:196px;top:117px" width="16" height="16" viewBox="0 0 16 16"><g transform="translate(0,0.6)"><path d="M0.4 4.3L4.6 0.5V2.8H11.4V5.8H4.6V8.1Z" fill="#fef4cc" stroke="#c8962e" stroke-width="1" stroke-linejoin="round"/><path d="M15.4 11.4L11.2 7.6V9.9H4.4V12.9H11.2V15.2Z" fill="#fef4cc" stroke="#c8962e" stroke-width="1" stroke-linejoin="round"/></g></svg>
<div class="sep" style="left:218px;top:116px;height:18px;"></div>
<svg style="left:229px;top:118px" width="14" height="14" viewBox="0 0 14 14"><circle cx="4" cy="3.6" r="3.2" fill="#d4d4d4"/><ellipse cx="3.6" cy="2.6" rx="1.8" ry="1" fill="#e9e9e9"/><circle cx="9.6" cy="5.4" r="3.2" fill="#c6c6c6"/><ellipse cx="9.2" cy="4.4" rx="1.8" ry="1" fill="#e0e0e0"/><circle cx="4.8" cy="9.6" r="3.3" fill="#a6a6a6"/><ellipse cx="4.6" cy="8.6" rx="1.9" ry="1" fill="#c4c4c4"/></svg>
<svg style="left:259px;top:120px" width="10" height="6" viewBox="0 0 10 6"><path d="M0.8 0.5H9.2L5 4.8Z" fill="#fff" stroke="#5a5a5a" stroke-width="0.9" stroke-linejoin="miter"/></svg>
<div class="panel" style="left:285px;top:86px;width:528px;height:481px;"></div>
<svg style="left:765px;top:94px" width="10" height="4" viewBox="0 0 10 4"><rect x="0.5" y="0.5" width="9" height="3" fill="#fff" stroke="#5a5a5a" stroke-width="1"/></svg>
<svg style="left:788px;top:94px" width="10" height="10" viewBox="0 0 10 10"><rect x="0.5" y="0.5" width="9" height="9" fill="#fff" stroke="#5a5a5a" stroke-width="1"/><path d="M0 2.5H10" stroke="#5a5a5a" stroke-width="1"/></svg>
<div class="a" style="left:817px;top:86px;width:300px;height:481px;box-sizing:border-box;border:1px solid #b6bccc;border-radius:5px;background:#fff;overflow:hidden;"><div class="a" style="left:0;top:0;width:298px;height:24px;background:linear-gradient(#d5e4f2 0,#d0e0f0 1.5px,#d0e0f0 24px);"></div><div class="a" style="left:0;top:24px;width:298px;height:1px;background:#b3bdd4;"></div><div class="a" style="left:0;top:0;width:94px;height:25px;background:#fff;border-radius:0 7px 0 0;border-right:1px solid #b3bdd4;"></div><div class="a" style="left:2px;top:49px;width:294px;height:428px;background:#cdddee;"></div></div>
<span class="t" style="left:824px;top:91px;font-size:18px;font-weight:bold;color:#22c922;line-height:20px;height:20px;transform-origin:0 0;transform:scaleX(0.92);">G</span>
<span class="t" style="left:841px;top:92px;letter-spacing:-0.1px;">Gradle...</span>
<svg style="left:895px;top:95px" width="10" height="10" viewBox="0 0 10 10"><path d="M0.5 0.5H2.6L5 2.9L7.4 0.5H9.5V2.6L7.1 5L9.5 7.4V9.5H7.4L5 7.1L2.6 9.5H0.5V7.4L2.9 5L0.5 2.6Z" fill="#fff" stroke="#5c5c5c" stroke-width="0.9" stroke-linejoin="miter"/></svg>
<svg style="left:918px;top:93px" width="14" height="15" viewBox="0 0 14 15"><defs><linearGradient id="og" x1="0" y1="0" x2="0" y2="1"><stop offset="0" stop-color="#ffffff"/><stop offset="1" stop-color="#a8d0f5"/></linearGradient></defs><rect x="0.6" y="0.6" width="4.8" height="4.8" fill="url(#og)" stroke="#1b6cb6" stroke-width="1.2"/><rect x="0.6" y="9.6" width="4.8" height="4.8" fill="url(#og)" stroke="#1b6cb6" stroke-width="1.2"/><path d="M7 3.5H13M7 12.5H13M11 7.5H13" stroke="#2a72b8" stroke-width="1"/><rect x="7.5" y="6.5" width="2" height="2" fill="#fff" stroke="#1b6cb6" stroke-width="0.9"/></svg>
<span class="t" style="left:936px;top:92px;letter-spacing:0.15px;">Outline</span>
<svg style="left:989px;top:93px" width="11" height="15" viewBox="0 0 11 15"><defs><linearGradient id="tg" x1="0" y1="0" x2="0" y2="1"><stop offset="0.3" stop-color="#ffffff"/><stop offset="1" stop-color="#a9a6dc"/></linearGradient></defs><path d="M0.5 0.5H10.3V13.2L8.2 12.4L6 14.2L3 14.2L0.5 12.8Z" fill="url(#tg)" stroke="#555560" stroke-width="1"/><path d="M2.3 3.2H8.6M2.3 4.9H8.6M2.3 6.6H8.6M2.3 8.3H8.6M2.3 10H8.6" stroke="#3c3c44" stroke-width="0.8"/></svg>
<span class="t" style="left:1006px;top:92px;letter-spacing:-0.45px;">Task Li...</span>
<svg style="left:1069px;top:94px" width="10" height="4" viewBox="0 0 10 4"><rect x="0.5" y="0.5" width="9" height="3" fill="#fff" stroke="#5a5a5a" stroke-width="1"/></svg>
<svg style="left:1092px;top:94px" width="10" height="10" viewBox="0 0 10 10"><rect x="0.5" y="0.5" width="9" height="9" fill="#fff" stroke="#5a5a5a" stroke-width="1"/><path d="M0 2.5H10" stroke="#5a5a5a" stroke-width="1"/></svg>
<svg style="left:965px;top:119px" width="14" height="13" viewBox="0 0 14 13"><rect x="0.5" y="0.5" width="10" height="10" fill="#ededed" stroke="#c6c6c6" stroke-width="1"/><rect x="2.5" y="2.5" width="10" height="10" fill="#f6f6f6" stroke="#c2c2c2" stroke-width="1"/><path d="M4.3 7.5H10.7M7.5 4.3V10.7" stroke="#8c8c8c" stroke-width="1.1"/></svg>
<svg style="left:988px;top:119px" width="14" height="13" viewBox="0 0 14 13"><rect x="0.5" y="0.5" width="10" height="10" fill="#ededed" stroke="#c6c6c6" stroke-width="1"/><rect x="2.5" y="2.5" width="10" height="10" fill="#f6f6f6" stroke="#c2c2c2" stroke-width="1"/><path d="M4.3 7.5H10.7" stroke="#8c8c8c" stroke-width="1.1"/></svg>
<svg style="left:1009px;top:118px" width="17" height="15" viewBox="0 0 17 15"><path d="M0 2.5H7M5 0.5L7.5 2.5L5 4.5M0 12.5H7M5 10.5L7.5 12.5L5 14.5" stroke="#3f7ea6" stroke-width="1" fill="none"/><path d="M9.5 0V4.8M9.5 10.2V15" stroke="#2a3f7f" stroke-width="1"/><path d="M4.6 6H11V4.3L15.6 7.5L11 10.7V9H4.6Q3.6 7.5 4.6 6Z" fill="#fffbe8" stroke="#cf961a" stroke-width="1" stroke-linejoin="round"/></svg>
<div class="sep" style="left:1031px;top:116px;height:18px;"></div>
<svg style="left:1041px;top:117px" width="15" height="16" viewBox="0 0 15 16"><path d="M5.2 4L9.2 0.8V2.6Q13.6 2.8 13.6 7.2Q13.4 8.6 12 9.4Q12 5.6 9.2 5.4V7.2Z" fill="#ffe680" stroke="#c99516" stroke-width="0.9" stroke-linejoin="round"/><path d="M9.6 12.2L5.6 15.4V13.6Q1.2 13.4 1.2 9Q1.4 7.6 2.8 6.8Q2.8 10.6 5.6 10.8V9Z" fill="#ffe680" stroke="#c99516" stroke-width="0.9" stroke-linejoin="round"/></svg>
<svg style="left:1062px;top:117px" width="17" height="16" viewBox="0 0 17 16"><path d="M0.6 4.2L5 0.4V2.7H13.4V5.7H5V8Z" fill="#fff7d6" stroke="#d29f1e" stroke-width="1" stroke-linejoin="round"/><path d="M15.9 11.8L11.5 8V10.3H3.1V13.3H11.5V15.6Z" fill="#fff7d6" stroke="#d29f1e" stroke-width="1" stroke-linejoin="round"/></svg>
<svg style="left:1095px;top:120px" width="10" height="6" viewBox="0 0 10 6"><path d="M0.8 0.5H9.2L5 4.8Z" fill="#fff" stroke="#5a5a5a" stroke-width="0.9" stroke-linejoin="miter"/></svg>
<span class="t" style="left:821px;top:136px;letter-spacing:-0.167px;">There are no Gradle projects in the current workspace. Ir</span>
<svg style="left:881px;top:102px" width="12" height="19" viewBox="0 0 12 19"><path d="M0.5 0.6V16.2L4.1 12.8L6.6 18.4L8.9 17.4L6.4 11.9H11.4Z" fill="#fff" stroke="#111" stroke-width="1" stroke-linejoin="miter"/></svg>
<div class="panel" style="left:285px;top:571px;width:832px;height:160px;"></div>
<div class="a" style="left:285px;top:571px;width:101px;height:27px;border-radius:6px 9px 0 0;background:linear-gradient(#e3e4ea 0,#ececf0 6px,#f8f8fa 17px,#fff 26px);"></div>
<div class="a" style="left:290px;top:571px;width:90px;height:1px;background:#d3d4da;"></div>
<svg style="left:290px;top:577px" width="15" height="15" viewBox="0 0 15 15"><path d="M0.5 0.5H13Q12 4 12.5 7Q13 11 14 14.5H0.5Z" fill="#edf3fb" stroke="#5a6788" stroke-width="1" stroke-linejoin="round"/><path d="M0.5 0.5V14.5" stroke="#b7a26a" stroke-width="1"/><path d="M9.5 1V14M1 7.5H12.5" stroke="#9fb2d8" stroke-width="0.9"/><circle cx="5.3" cy="4.2" r="2.5" fill="#e32636"/><path d="M2.8 13.5Q2.8 9.5 5.3 8.7Q7.8 9.5 7.8 13.5Z" fill="#f6a81c"/></svg>
<span class="t" style="left:310px;top:577px;letter-spacing:-0.2px;">Problems</span>
<svg style="left:368px;top:580px" width="10" height="10" viewBox="0 0 10 10"><path d="M0.5 0.5H2.6L5 2.9L7.4 0.5H9.5V2.6L7.1 5L9.5 7.4V9.5H7.4L5 7.1L2.6 9.5H0.5V7.4L2.9 5L0.5 2.6Z" fill="#fff" stroke="#5c5c5c" stroke-width="0.9" stroke-linejoin="miter"/></svg>
<span class="t" style="left:392px;top:576px;font-family:'Liberation Serif',serif;font-size:11.5px;color:#78a5cf;font-style:italic;">@</span>
<span class="t gray" style="left:409px;top:577px;letter-spacing:-0.5px;">Javadoc</span>
<svg style="left:462px;top:577px" width="15" height="16" viewBox="0 0 15 16"><path d="M0.6 0.6H7.4L10.6 3.8V13.4H0.6Z" fill="#fdfcf6" stroke="#c9b684" stroke-width="0.9" stroke-linejoin="round"/><path d="M4.6 3.6Q3.2 3.6 3.5 5.2Q3.7 6.4 2.6 6.9Q3.7 7.4 3.5 8.6Q3.2 10.2 4.6 10.2" stroke="#5f7196" stroke-width="0.9" fill="none"/><path d="M5.6 6H8.6M5.6 8H8.6" stroke="#5f7196" stroke-width="0.9"/><path d="M5 11.4H10V9.6L14 12.6L10 15.6V13.8H5Z" fill="#fdf3cf" stroke="#d5a84a" stroke-width="0.9" stroke-linejoin="round"/></svg>
<span class="t gray" style="left:481px;top:577px;letter-spacing:-0.25px;">Declaration</span>
<svg style="left:1018px;top:578px" width="14" height="14" viewBox="0 0 14 14"><circle cx="4" cy="3.6" r="3.2" fill="#d4d4d4"/><ellipse cx="3.6" cy="2.6" rx="1.8" ry="1" fill="#e9e9e9"/><circle cx="9.6" cy="5.4" r="3.2" fill="#c6c6c6"/><ellipse cx="9.2" cy="4.4" rx="1.8" ry="1" fill="#e0e0e0"/><circle cx="4.8" cy="9.6" r="3.3" fill="#a6a6a6"/><ellipse cx="4.6" cy="8.6" rx="1.9" ry="1" fill="#c4c4c4"/></svg>
<svg style="left:1049px;top:579px" width="10" height="6" viewBox="0 0 10 6"><path d="M0.8 0.5H9.2L5 4.8Z" fill="#fff" stroke="#5a5a5a" stroke-width="0.9" stroke-linejoin="miter"/></svg>
<svg style="left:1069px;top:579px" width="10" height="4" viewBox="0 0 10 4"><rect x="0.5" y="0.5" width="9" height="3" fill="#fff" stroke="#5a5a5a" stroke-width="1"/></svg>
<svg style="left:1092px;top:579px" width="10" height="10" viewBox="0 0 10 10"><rect x="0.5" y="0.5" width="9" height="9" fill="#fff" stroke="#5a5a5a" stroke-width="1"/><path d="M0 2.5H10" stroke="#5a5a5a" stroke-width="1"/></svg>
<span class="t" style="left:288px;top:599px;letter-spacing:-0.05px;">0 items</span>
<div class="a" style="left:288px;top:614px;width:826px;height:1px;background:#8c8c8c;"></div>
<div class="a" style="left:288px;top:640px;width:299px;height:88px;background:#f5f5f5;"></div>
<div class="a" style="left:587px;top:616px;width:1px;height:112px;background:#e1e1e1;"></div>
<div class="a" style="left:677px;top:616px;width:1px;height:112px;background:#e1e1e1;"></div>
<div class="a" style="left:797px;top:616px;width:1px;height:112px;background:#e1e1e1;"></div>
<div class="a" style="left:887px;top:616px;width:1px;height:112px;background:#e1e1e1;"></div>
<div class="a" style="left:977px;top:616px;width:1px;height:112px;background:#e1e1e1;"></div>
<div class="a" style="left:288px;top:657px;width:826px;height:1px;background:#e1e1e1;"></div>
<div class="a" style="left:288px;top:675px;width:826px;height:1px;background:#e1e1e1;"></div>
<div class="a" style="left:288px;top:693px;width:826px;height:1px;background:#e1e1e1;"></div>
<div class="a" style="left:288px;top:711px;width:826px;height:1px;background:#e1e1e1;"></div>
<svg style="left:434px;top:616px" width="10" height="5" viewBox="0 0 10 5"><path d="M0.8 4.3L4.8 0.7L8.8 4.3" fill="none" stroke="#4a4a4a" stroke-width="1"/></svg>
<span class="t" style="left:294px;top:620px;letter-spacing:-0.13px;">Description</span>
<span class="t" style="left:594px;top:620px;letter-spacing:-0.45px;">Resource</span>
<span class="t" style="left:684px;top:620px;letter-spacing:-0.4px;">Path</span>
<span class="t" style="left:804px;top:620px;letter-spacing:0px;">Location</span>
<span class="t" style="left:894px;top:620px;letter-spacing:-0.25px;">Type</span>
<svg style="left:834px;top:738px" width="4" height="18" viewBox="0 0 4 18"><rect x="0.4" y="0.4" width="3.2" height="4.2" fill="#ffffff" fill-opacity="0.22"/><rect x="1" y="1" width="2" height="3" fill="#a89a7c"/><rect x="1" y="1" width="2" height="1" fill="#c8bca4"/><rect x="0.4" y="5.4" width="3.2" height="3.2" fill="#ffffff" fill-opacity="0.22"/><rect x="1" y="6" width="2" height="2" fill="#a89a7c"/><rect x="1" y="6" width="2" height="1" fill="#c8bca4"/><rect x="0.4" y="9.4" width="3.2" height="3.2" fill="#ffffff" fill-opacity="0.22"/><rect x="1" y="10" width="2" height="2" fill="#a89a7c"/><rect x="1" y="10" width="2" height="1" fill="#c8bca4"/><rect x="0.4" y="14.4" width="3.2" height="3.2" fill="#ffffff" fill-opacity="0.22"/><rect x="1" y="15" width="2" height="2" fill="#a89a7c"/><rect x="1" y="15" width="2" height="1" fill="#c8bca4"/></svg>
<!--PANELS_END-->
</div></div>
</body>
</html>
